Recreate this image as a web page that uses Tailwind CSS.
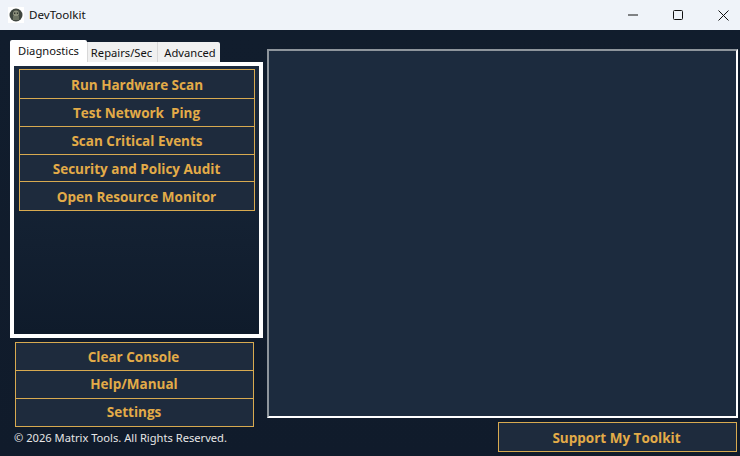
<!DOCTYPE html>
<html lang="en">
<head>
    <meta charset="UTF-8">
    <title>DevToolkit</title>
    <script src="https://cdn.jsdelivr.net/npm/@tailwindcss/browser@4"></script>
</head>
<body class="w-[740px] h-[456px] overflow-hidden bg-[#101c2c] font-['Open_Sans','Noto_Sans',sans-serif]">
    <!-- Title bar -->
    <div class="h-[30px] bg-[#eff3f9] flex items-center justify-between">
        <div class="flex items-center pl-[8px]">
            <div class="w-[16px] h-[16px] bg-white flex items-center justify-center">
                <svg width="14" height="14" viewBox="0 0 14 14">
                    <circle cx="7" cy="7" r="6.5" fill="#3f4640"/>
                    <circle cx="7" cy="5.5" r="3" fill="#8b8f7c"/>
                    <rect x="4" y="8" width="6" height="4" fill="#6c7263"/>
                    <rect x="5" y="4.5" width="1.4" height="1.4" fill="#2a2d28"/>
                    <rect x="7.8" y="4.5" width="1.4" height="1.4" fill="#2a2d28"/>
                </svg>
            </div>
            <span class="ml-[5px] text-[11.6px] text-[#111] font-['Noto_Sans',sans-serif]">DevToolkit</span>
        </div>
        <div class="flex items-center gap-[35px] pr-[11px]">
            <svg width="10" height="10" viewBox="0 0 10 10"><path d="M0 5h10" stroke="#111" stroke-width="1"/></svg>
            <svg width="10" height="10" viewBox="0 0 10 10"><rect x=".5" y=".5" width="9" height="9" rx="1" fill="none" stroke="#111" stroke-width="1"/></svg>
            <svg width="11" height="11" viewBox="0 0 11 11"><path d="M.5.5l10 10M10.5.5l-10 10" stroke="#111" stroke-width="1"/></svg>
        </div>
    </div>

    <div class="flex h-[426px] bg-gradient-to-b from-[#111d2d] to-[#101b2b]">
        <!-- Left column -->
        <div class="w-[267px] pl-[10px] pr-[4px] pt-[10px] flex flex-col">
            <div class="flex items-end h-[22px] text-[11.2px] text-[#111] font-['Noto_Sans',sans-serif]">
                <div class="w-[77px] h-[22px] pt-px bg-white rounded-t-[2px] flex items-center justify-center">Diagnostics</div>
                <div class="w-[70px] h-[20px] pt-[2px] pr-[2px] bg-[#f0f0f0] border-l border-[#d8d8d8] flex items-center justify-center">Repairs/Sec</div>
                <div class="w-[63px] h-[20px] pt-[2px] pl-[2px] bg-[#f0f0f0] border-l border-[#d8d8d8] rounded-tr-[2px] flex items-center justify-center">Advanced</div>
            </div>
            <div class="h-[276px] border-4 border-white pl-[5px] pr-[4px] pt-[3px] bg-gradient-to-b from-[#1b2a3d] to-[#0f1b2b]">
                <div class="flex flex-col text-[13.5px] font-bold text-[#e3ab48]">
                    <div class="h-[30px] -mb-px pt-[2px] bg-[#1e2b3d] border border-[#d8aa50] flex items-center justify-center">Run Hardware Scan</div>
                    <div class="h-[29px] -mb-px pt-px pr-px bg-[#1e2b3d] border border-[#d8aa50] flex items-center justify-center whitespace-pre">Test Network  Ping</div>
                    <div class="h-[29px] -mb-px pt-[2px] bg-[#1e2b3d] border border-[#d8aa50] flex items-center justify-center">Scan Critical Events</div>
                    <div class="h-[28px] -mb-px pt-[3px] pr-px bg-[#1e2b3d] border border-[#d8aa50] flex items-center justify-center">Security and Policy Audit</div>
                    <div class="h-[30px] pt-[2px] pr-px bg-[#1e2b3d] border border-[#d8aa50] flex items-center justify-center">Open Resource Monitor</div>
                </div>
            </div>
            <div class="mt-[4px] ml-[5px] w-[239px] flex flex-col text-[13.5px] font-bold text-[#e3ab48]">
                <div class="h-[29px] -mb-px pt-[2px] pr-[2px] bg-[#1e2b3d] border border-[#d8aa50] flex items-center justify-center">Clear Console</div>
                <div class="h-[29px] -mb-px pr-px bg-[#1e2b3d] border border-[#d8aa50] flex items-center justify-center">Help/Manual</div>
                <div class="h-[29px] pr-px bg-[#1e2b3d] border border-[#d8aa50] flex items-center justify-center">Settings</div>
            </div>
            <div class="mt-[2px] ml-[4px] text-[11.15px] leading-[18px] text-[#e6e6e6] font-['Noto_Sans',sans-serif] whitespace-nowrap">© 2026 Matrix Tools. All Rights Reserved.</div>
        </div>
        <!-- Right column -->
        <div class="flex-1 pt-[19px] pr-[2px] flex flex-col">
            <div class="h-[369px] bg-[#1c2b3e] border-2 border-t-[#8e959c] border-l-[#8e959c] border-r-white border-b-white"></div>
            <div class="mt-[4px] ml-[231px] mr-[1px] h-[30px] pt-[2px] pr-[2px] bg-[#1e2b3d] border border-[#d8aa50] flex items-center justify-center text-[13.5px] font-bold text-[#e3ab48]">Support My Toolkit</div>
        </div>
    </div>
</body>
</html>
